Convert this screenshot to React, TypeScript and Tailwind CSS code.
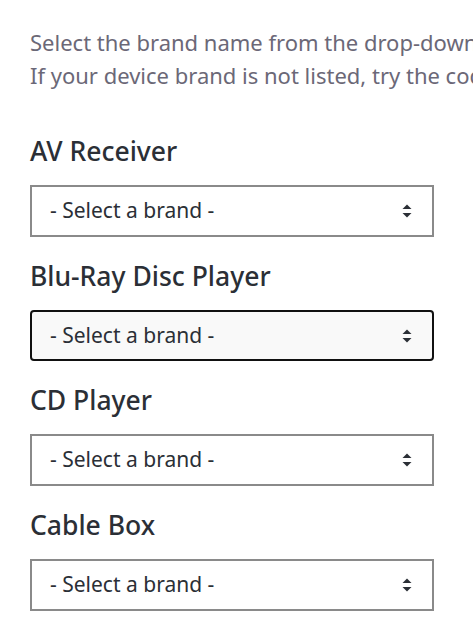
import React from "react";

const Arrow = () => (
  <svg width="10" height="14" viewBox="0 0 10 14" className="shrink-0">
    <path d="M5 0.5 L9.5 5 L0.5 5 Z" fill="#2b2f36" />
    <path d="M5 13.5 L9.5 9 L0.5 9 Z" fill="#2b2f36" />
  </svg>
);

const Section = ({ title, focused }: { title: string; focused?: boolean }) => (
  <div className="mb-[23px]">
    <h2 className="text-[26.5px] leading-[32px] font-medium text-[#2b2f36]">{title}</h2>
    <div
      className={
        focused
          ? "mt-[18px] h-[51px] w-[404px] border-2 border-[#111] rounded-[4px] bg-[#f9f9f9] flex items-center justify-between pl-[18px] pr-[20px]"
          : "mt-[18px] h-[52px] w-[404px] border-2 border-[#8a8a8a] bg-white flex items-center justify-between pl-[18px] pr-[20px]"
      }
    >
      <span className="text-[21px] text-[#2b2f36]">- Select a brand -</span>
      <Arrow />
    </div>
  </div>
);

export default function App() {
  return (
    <div
      className="w-[473px] h-[629px] overflow-hidden bg-white pl-[30px] pt-[26px]"
      style={{ fontFamily: '"Noto Sans", sans-serif' }}
    >
      <p className="text-[22px] leading-[33px] text-[#6b6877] whitespace-nowrap">
        Select the brand name from the drop-down list below.
        <br />
        If your device brand is not listed, try the code search.
      </p>
      <div className="mt-[43px]">
        <Section title="AV Receiver" />
        <Section title="Blu-Ray Disc Player" focused />
        <Section title="CD Player" />
        <Section title="Cable Box" />
      </div>
    </div>
  );
}
